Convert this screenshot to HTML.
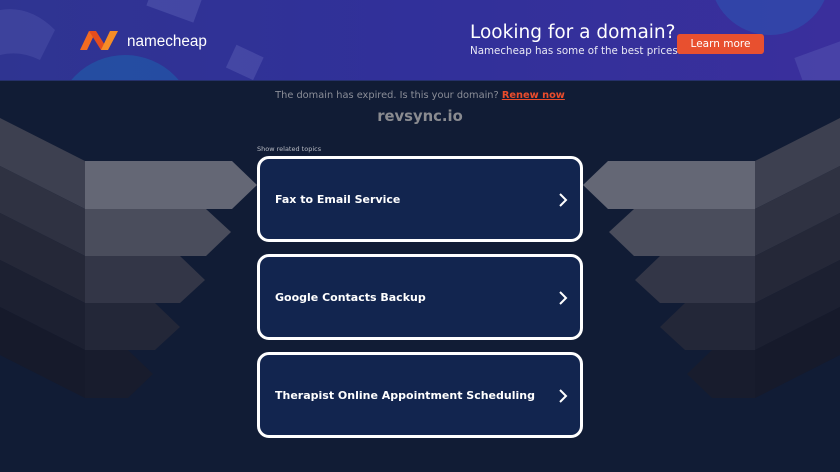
<!DOCTYPE html>
<html><head><style>
*{margin:0;padding:0;box-sizing:border-box}
body{width:840px;height:472px;overflow:hidden;background:#111c35;font-family:"DejaVu Sans","Liberation Sans",sans-serif;position:relative}
.banner{position:absolute;left:0;top:0;width:840px;height:81px;background:linear-gradient(90deg,#2f3491 0%,#31309a 50%,#3a2f9c 100%);overflow:hidden;border-bottom:1px solid #25306a}
.bg{position:absolute;left:0;top:0}
.msg{position:absolute;top:90px;width:840px;text-align:center;font-size:9.8px;color:#8b8e98}
.msg a{color:#ea4c2c;font-weight:bold;text-decoration:underline}
.dom{position:absolute;top:108px;width:840px;text-align:center;font-size:14.8px;font-weight:bold;color:#8a8b90}
.rel{position:absolute;left:257px;top:145px;font-size:6.5px;color:#b9bcc4}
.card{position:absolute;left:257px;width:326px;height:86px;border:3px solid #fff;border-radius:12px;background:#12254f;color:#fff;font-weight:bold;font-size:11px;padding-left:15px;display:flex;align-items:center}
.card svg{position:absolute;right:12px;top:34px}
</style></head><body>
<svg class="bg" width="840" height="472">
<g id="L">
<polygon points="0,118 85,161 85,209 0,166" fill="#3d4050"/>
<polygon points="0,166 85,209 85,256 0,213" fill="#2f3242"/>
<polygon points="0,213 85,256 85,303 0,260" fill="#252838"/>
<polygon points="0,260 85,303 85,350 0,307" fill="#1c2031"/>
<polygon points="0,307 85,350 85,398 0,355" fill="#161a2b"/>
<polygon points="85,161 232,161 257,185 232,209 85,209" fill="#646775"/>
<polygon points="85,209 206,209 231,232 206,256 85,256" fill="#4a4d5c"/>
<polygon points="85,256 180,256 205,280 180,303 85,303" fill="#333647"/>
<polygon points="85,303 155,303 180,327 155,350 85,350" fill="#232738"/>
<polygon points="85,350 128,350 153,374 128,398 85,398" fill="#181c2d"/>
</g>
<use href="#L" transform="translate(840,0) scale(-1,1)"/>
</svg>
<div class="banner">
<svg width="840" height="81" style="position:absolute;left:0;top:0">
<circle cx="125" cy="125" r="70" fill="#1d62ad" opacity=".55"/>
<circle cx="770" cy="-25" r="60" fill="#2a5fb8" opacity=".45"/>
<rect x="150" y="-10" width="50" height="25" fill="#6a6fc0" opacity=".35" transform="rotate(20 175 0)"/>
<rect x="230" y="50" width="30" height="25" fill="#6a6fc0" opacity=".35" transform="rotate(25 245 62)"/>
<rect x="800" y="50" width="50" height="40" fill="#6a6fc0" opacity=".3" transform="rotate(-20 820 70)"/>
<path d="M0 10 Q30 5 55 30 L40 60 Q20 50 0 55Z" fill="#5a5fb3" opacity=".35"/>
<g transform="translate(80,30)"><path d="M0 20 L9 1 L16 1 L7 20Z" fill="#f26b21"/><path d="M9 1 L21 20 L28 20 L16 1Z" fill="#e44d1d"/><path d="M21 20 L30 1 L38 1 L28 20Z" fill="#f58d27"/></g>
</svg>
<div style="position:absolute;left:127px;top:33px;color:#fff;font-size:15.3px;font-family:'Liberation Sans',sans-serif">namecheap</div>
<div style="position:absolute;left:470px;top:22px;color:#fff;font-size:18.5px">Looking for a domain?</div>
<div style="position:absolute;left:470px;top:45px;color:#e9e9f5;font-size:10.3px">Namecheap has some of the best prices.</div>
<div style="position:absolute;left:677px;top:34px;width:87px;height:20px;background:#e8502f;border-radius:3px;color:#fff;font-size:10.5px;text-align:center;line-height:20px">Learn more</div>
</div>
<div class="msg">The domain has expired. Is this your domain? <a>Renew now</a></div>
<div class="dom">revsync.io</div>
<div class="rel">Show related topics</div>
<div class="card" style="top:156px">Fax to Email Service<svg width="10" height="14"><path d="M2 1 L8 7 L2 13" stroke="#fff" stroke-width="2" fill="none"/></svg></div>
<div class="card" style="top:254px">Google Contacts Backup<svg width="10" height="14"><path d="M2 1 L8 7 L2 13" stroke="#fff" stroke-width="2" fill="none"/></svg></div>
<div class="card" style="top:352px">Therapist Online Appointment Scheduling<svg width="10" height="14"><path d="M2 1 L8 7 L2 13" stroke="#fff" stroke-width="2" fill="none"/></svg></div>
</body></html>
